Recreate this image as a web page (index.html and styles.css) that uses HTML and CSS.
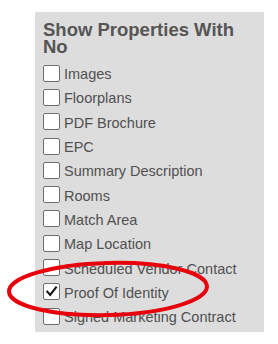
FILE: index.html
```html
<!DOCTYPE html>
<html>
<head>
<meta charset="utf-8">
<link rel="stylesheet" href="styles.css">
</head>
<body>
<div class="panel">
  <h2 class="title">Show Properties With No</h2>
  <ul class="list">
    <li class="row"><span class="box"></span><span class="label">Images</span></li>
    <li class="row"><span class="box"></span><span class="label">Floorplans</span></li>
    <li class="row"><span class="box"></span><span class="label">PDF Brochure</span></li>
    <li class="row"><span class="box"></span><span class="label">EPC</span></li>
    <li class="row"><span class="box"></span><span class="label">Summary Description</span></li>
    <li class="row"><span class="box"></span><span class="label">Rooms</span></li>
    <li class="row"><span class="box"></span><span class="label">Match Area</span></li>
    <li class="row"><span class="box"></span><span class="label">Map Location</span></li>
    <li class="row"><span class="box"></span><span class="label">Scheduled Vendor Contact</span></li>
    <li class="row"><span class="box checked"><svg viewBox="0 0 16 16" width="16" height="16"><path d="M3.5 8.2 L6.6 11.6 L12.8 3.6" fill="none" stroke="#111" stroke-width="2.2" stroke-linecap="square"/></svg></span><span class="label">Proof Of Identity</span></li>
    <li class="row"><span class="box"></span><span class="label">Signed Marketing Contract</span></li>
  </ul>
</div>
<svg class="circle" width="278" height="344" viewBox="0 0 278 344">
  <ellipse cx="108" cy="289" rx="99" ry="26" transform="rotate(-1.5 108 289)" fill="none" stroke="#e8000b" stroke-width="4"/>
</svg>
</body>
</html>
```
FILE: styles.css
```css
html, body {
  margin: 0;
  padding: 0;
  background: #ffffff;
}
body {
  position: relative;
  width: 278px;
  height: 344px;
  overflow: hidden;
  font-family: "Liberation Sans", Arial, sans-serif;
}
.panel {
  margin: 12px 0 0 35px;
  width: 229px;
  height: 320px;
  background: #dddddd;
  box-sizing: border-box;
  padding: 9px 0 0 8px;
}
.title {
  margin: 0;
  font-size: 18.5px;
  line-height: 17px;
  font-weight: bold;
  color: #555555;
  width: 205px;
}
.list {
  list-style: none;
  margin: 6px 0 0 0;
  padding: 0;
}
.row {
  display: flex;
  align-items: center;
  height: 24.3px;
}
.box {
  width: 15px;
  height: 15px;
  border: 1px solid #6e6e6e;
  border-radius: 2px;
  background: #ffffff;
  flex: none;
  position: relative;
}
.box svg {
  position: absolute;
  left: 0;
  top: 0;
  width: 15px;
  height: 15px;
}
.label {
  margin-left: 4px;
  font-size: 14.5px;
  color: #505050;
  white-space: nowrap;
  position: relative;
  top: 1px;
}
.circle {
  position: absolute;
  left: 0;
  top: 0;
  pointer-events: none;
}
```
